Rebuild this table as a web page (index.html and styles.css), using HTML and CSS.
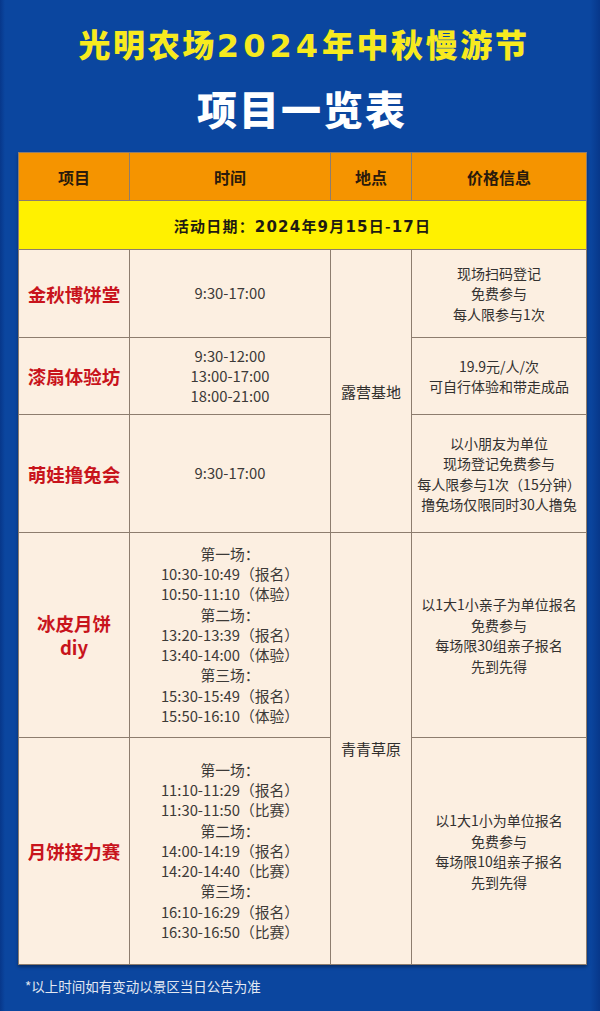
FILE: index.html
```html
<!DOCTYPE html>
<html lang="zh-CN">
<head>
<meta charset="utf-8">
<title>光明农场2024年中秋慢游节 项目一览表</title>
<link rel="stylesheet" href="styles.css">
</head>
<body>
<div class="page">
  <header class="head">
    <h1 class="title">光明农场<span class="num">2024</span>年中秋慢游节</h1>
    <h2 class="subtitle">项目一览表</h2>
  </header>

  <table class="sched">
    <colgroup>
      <col class="c-item">
      <col class="c-time">
      <col class="c-place">
      <col class="c-price">
    </colgroup>
    <thead>
      <tr class="h-row">
        <th>项目</th>
        <th>时间</th>
        <th>地点</th>
        <th>价格信息</th>
      </tr>
      <tr class="d-row">
        <th colspan="4" class="date">活动日期：<span class="dnum">2024</span>年<span class="dnum">9</span>月<span class="dnum">15</span>日-<span class="dnum">17</span>日</th>
      </tr>
    </thead>
    <tbody>
      <tr class="r1">
        <td class="item">金秋博饼堂</td>
        <td class="time">9:30-17:00</td>
        <td class="place" rowspan="3">露营基地</td>
        <td class="price">现场扫码登记<br>免费参与<br>每人限参与1次</td>
      </tr>
      <tr class="r2">
        <td class="item">漆扇体验坊</td>
        <td class="time">9:30-12:00<br>13:00-17:00<br>18:00-21:00</td>
        <td class="price">19.9元/人/次<br>可自行体验和带走成品</td>
      </tr>
      <tr class="r3">
        <td class="item">萌娃撸兔会</td>
        <td class="time">9:30-17:00</td>
        <td class="price">以小朋友为单位<br>现场登记免费参与<br>每人限参与1次（15分钟）<br>撸兔场仅限同时30人撸兔</td>
      </tr>
      <tr class="r4">
        <td class="item item-two"><span class="line">冰皮月饼</span><span class="line">diy</span></td>
        <td class="time">第一场：<br>10:30-10:49（报名）<br>10:50-11:10（体验）<br>第二场：<br>13:20-13:39（报名）<br>13:40-14:00（体验）<br>第三场：<br>15:30-15:49（报名）<br>15:50-16:10（体验）</td>
        <td class="place" rowspan="2">青青草原</td>
        <td class="price">以1大1小亲子为单位报名<br>免费参与<br>每场限30组亲子报名<br>先到先得</td>
      </tr>
      <tr class="r5">
        <td class="item">月饼接力赛</td>
        <td class="time">第一场：<br>11:10-11:29（报名）<br>11:30-11:50（比赛）<br>第二场：<br>14:00-14:19（报名）<br>14:20-14:40（比赛）<br>第三场：<br>16:10-16:29（报名）<br>16:30-16:50（比赛）</td>
        <td class="price">以1大1小为单位报名<br>免费参与<br>每场限10组亲子报名<br>先到先得</td>
      </tr>
    </tbody>
  </table>

  <p class="note">*以上时间如有变动以景区当日公告为准</p>
</div>
</body>
</html>
```

FILE: styles.css
```css
html, body {
  margin: 0;
  padding: 0;
}

body {
  width: 600px;
  min-height: 1011px;
  background: linear-gradient(90deg, #07378a 0, #0b469f 5px, #0b469f 590px, #07378a 600px);
  font-family: "Noto Sans CJK SC", "Noto Sans", sans-serif;
  color: #333;
}

.page {
  padding: 23px 14px 0 18px;
}

.head {
  display: flex;
  flex-direction: column;
  align-items: center;
  gap: 18px;
  margin-bottom: 20px;
}

.title {
  margin: 0;
  font-size: 32px;
  line-height: 40px;
  font-weight: 900;
  color: #f7ea1f;
  letter-spacing: 2.6px;
  white-space: nowrap;
  padding-left: 4px;
}

.title .num {
  font-family: "DejaVu Sans", sans-serif;
  font-weight: 700;
  letter-spacing: 4px;
}

.subtitle {
  margin: 0;
  font-size: 40px;
  line-height: 48px;
  font-weight: 900;
  color: #fff;
  letter-spacing: 2px;
}

.sched {
  width: 568px;
  table-layout: fixed;
  border-collapse: collapse;
  border: 1px solid #4d4036;
  box-shadow: 0 2px 3px rgba(0, 0, 0, 0.35);
}

.c-item { width: 111px; }
.c-time { width: 201px; }
.c-place { width: 81px; }
.c-price { width: 175px; }

.sched th,
.sched td {
  border: 1px solid #8d7d6e;
  padding: 0;
  text-align: center;
  vertical-align: middle;
}

.h-row { height: 48px; }
.h-row th {
  background: #f59400;
  color: #2a1a0c;
  font-size: 16px;
  font-weight: 700;
}

.d-row { height: 49px; }
.date {
  background: #fff100;
  color: #1e1a12;
  font-size: 15px;
  font-weight: 700;
  letter-spacing: 1.2px;
}

.date .dnum {
  font-family: "DejaVu Sans", sans-serif;
  font-weight: 700;
}

.sched td {
  background: #fcefe1;
}

.r1 { height: 88px; }
.r2 { height: 77px; }
.r3 { height: 118px; }
.r4 { height: 205px; }
.r5 { height: 227px; }

.item {
  color: #c8141c;
  font-size: 18.5px;
  font-weight: 700;
  line-height: 24px;
}

.item-two .line {
  display: block;
}

.time {
  font-size: 14.8px;
  line-height: 20.2px;
  color: #3c3a38;
}

.place {
  font-size: 15px;
  color: #2f2d2b;
}

.price {
  font-size: 14px;
  line-height: 20.5px;
  color: #333130;
}

.note {
  margin: 11px 0 0 7px;
  font-size: 13.5px;
  line-height: 20px;
  color: #e3e8f2;
}
```
